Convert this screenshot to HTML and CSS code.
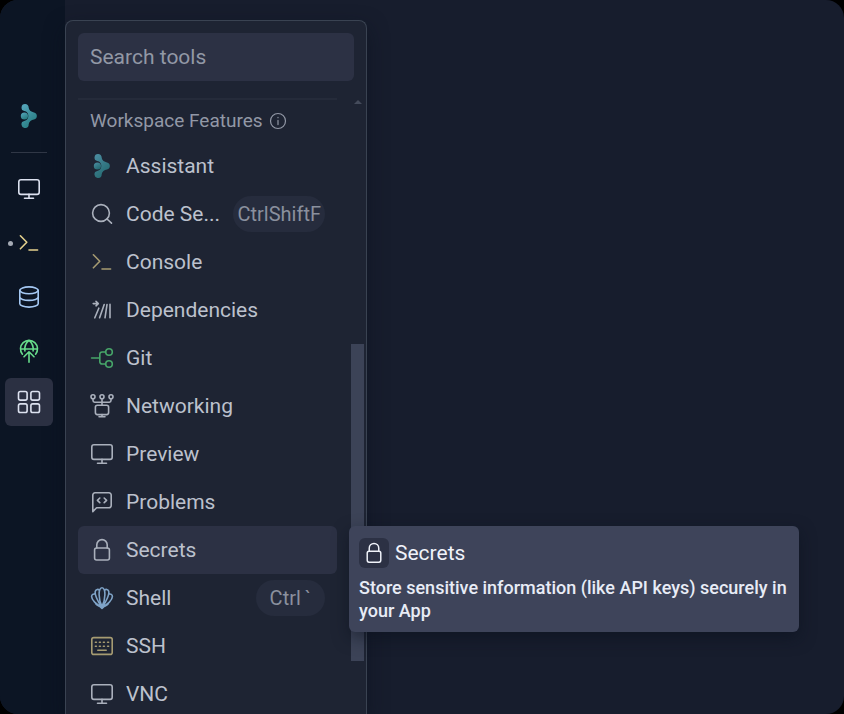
FILE: index.html
```html
<!DOCTYPE html>
<html lang="en">
<head>
<meta charset="utf-8">
<meta name="viewport" content="width=device-width, initial-scale=1">
<title>Workspace tools</title>
<link rel="stylesheet" href="styles.css">
</head>
<body>
<svg class="sprite" aria-hidden="true">
  <defs>
    <linearGradient id="teal" x1="0" y1="0" x2="0.6" y2="1">
      <stop offset="0" stop-color="#59a9c0"/>
      <stop offset="1" stop-color="#267b80"/>
    </linearGradient>
  </defs>
  <symbol id="assistant" viewBox="0 0 24 24">
    <g fill="url(#teal)" stroke="none">
      <path d="M8 0a3.600 3.600 0 0 1 3.700 3.700c.3 2.600 2.600 4.200 5.300 4.700a3.700 3.700 0 0 1 0 7.200c-2.700.5-5 2.100-5.300 4.700A3.600 3.600 0 1 1 7.300 16.900 5 5 0 0 0 7.300 7.100 3.600 3.600 0 0 1 8 0Z"/>
      <circle cx="7.400" cy="12" r="3.600"/>
    </g>
  </symbol>
  <symbol id="monitor" viewBox="0 0 24 24"><rect x="1.8" y="2.800" width="20.4" height="14.600" rx="2.2"/><path d="M12 17.400v3.800M7.5 21.200h9"/></symbol>
  <symbol id="console" viewBox="0 0 24 24"><path d="m3.4 4.8 6.4 6.5-6.4 6.5M12 19h8.6"/></symbol>
  <symbol id="database" viewBox="0 0 24 24"><ellipse cx="12" cy="5.3" rx="9.2" ry="3.4"/><path d="M2.8 5.3v13.4c0 1.9 4.1 3.4 9.2 3.4s9.2-1.5 9.2-3.4V5.3M2.8 12c0 1.9 4.1 3.4 9.2 3.4s9.2-1.5 9.2-3.4"/></symbol>
  <symbol id="deploy" viewBox="0 0 24 24"><path d="M5.400 15.200a8.500 8.500 0 1 1 13.200 0M3.600 10h16.800M7.900 12C7.400 8 8.600 4 12 1.300c3.400 2.700 4.600 6.700 4.100 10.700M12 23.200V13M7 17.800l5-5 5 5"/></symbol>
  <symbol id="grid" viewBox="0 0 24 24"><rect x="1.500" y="1.500" width="8.600" height="8.600" rx="1.8"/><rect x="13.900" y="1.500" width="8.600" height="8.600" rx="1.8"/><rect x="1.500" y="13.900" width="8.600" height="8.600" rx="1.8"/><rect x="13.900" y="13.900" width="8.600" height="8.600" rx="1.8"/></symbol>
  <symbol id="info" viewBox="0 0 24 24"><circle cx="12" cy="12" r="10"/><path d="M12 11.2v5.6M12 7.2v.4"/></symbol>
  <symbol id="search" viewBox="0 0 24 24"><circle cx="11" cy="11" r="8.4"/><path d="m17 17 4.5 4.2"/></symbol>
  <symbol id="dependencies" viewBox="0 0 24 24"><path d="M3.200 5.600h5M6 3.400l2.300 2.200L6 7.800M4.800 19.800l4-9.600M9.600 19.800l4.600-13.200M15 19.800l2-13.200M20 6.400v13.400"/></symbol>
  <symbol id="git" viewBox="0 0 24 24"><path d="M1.6 12h8.2M15.5 6H12a2.2 2.2 0 0 0-2.2 2.2v7.6A2.2 2.2 0 0 0 12 18h3.5"/><circle cx="19" cy="6" r="3.3"/><circle cx="19" cy="18" r="3.3"/></symbol>
  <symbol id="network" viewBox="0 0 24 24"><circle cx="3" cy="2.8" r="2"/><circle cx="12" cy="2.8" r="2"/><circle cx="21" cy="2.8" r="2"/><path d="M3 4.8v1.8a1.6 1.6 0 0 0 1.6 1.6h14.8A1.6 1.6 0 0 0 21 6.600V4.800M12 4.800v6.400M12 20.600v2M9 22.800h6"/><rect x="5.400" y="11.200" width="13.200" height="9.400" rx="2"/></symbol>
  <symbol id="problems" viewBox="0 0 24 24"><path d="M2.800 21.600V5A2.200 2.200 0 0 1 5 2.800h14A2.200 2.200 0 0 1 21.200 5v10.600a2.200 2.200 0 0 1-2.200 2.200H6.600ZM9.800 8l-2.400 2.300 2.400 2.300M14.200 8l2.400 2.300-2.400 2.300"/></symbol>
  <symbol id="lock" viewBox="0 0 24 24"><rect x="4.600" y="10" width="14.800" height="12" rx="2"/><path d="M6.800 10V6.800a5.200 5.200 0 0 1 10.400 0V10"/></symbol>
  <symbol id="shell" viewBox="0 0 24 24"><path d="M12 20.500C8.500 14 7.800 1.800 12 1.800s3.500 12.200 0 18.700M11.500 20.500C7.500 15.500 4.500 8 5.300 5.200 6 3 8.200 3 9.400 4.200M12.500 20.500c4-5 7-12.500 6.200-15.300-.7-2.200-2.900-2.200-4.100-1M11 20.500C6.500 18.500 1.600 14 1.600 10.600c0-2 1.600-3 3.700-2.400M13 20.500c4.500-2 9.400-6.500 9.400-9.900 0-2-1.600-3-3.700-2.400M5.500 17.300c1 1.900 2.500 2.700 5.200 2.700M18.500 17.300c-1 1.900-2.500 2.700-5.200 2.700"/><path fill="currentColor" d="M8.600 19.500h6.800L12 22.400Z"/></symbol>
  <symbol id="keyboard" viewBox="0 0 24 24"><rect x="1.800" y="3.600" width="20.400" height="16.800" rx="2"/><path d="M5.400 8.200h1M9.400 8.200h1M13.400 8.200h1M17.600 8.200h1M5.400 12.200h1M9.400 12.200h1M13.400 12.200h1M17.600 12.200h1M7.800 16.200h8.400"/></symbol>
</svg>

<div class="app">
  <nav class="rail" aria-label="Tools">
    <button class="rail-btn" aria-label="Assistant"><svg class="icon"><use href="#assistant"/></svg></button>
    <hr class="rail-rule">
    <div class="rail-group">
      <button class="rail-btn" aria-label="Preview"><svg class="icon"><use href="#monitor"/></svg></button>
      <button class="rail-btn open yellow" aria-label="Console"><svg class="icon"><use href="#console"/></svg></button>
      <button class="rail-btn blue" aria-label="Database"><svg class="icon"><use href="#database"/></svg></button>
      <button class="rail-btn green" aria-label="Deployments"><svg class="icon"><use href="#deploy"/></svg></button>
    </div>
    <button class="rail-btn active" aria-label="All tools"><svg class="icon"><use href="#grid"/></svg></button>
  </nav>

  <section class="menu" aria-label="All tools">
    <input class="search" type="search" placeholder="Search tools" aria-label="Search tools">
    <div class="menu-body">
      <div class="list">
        <h2 class="heading">Workspace Features <svg class="icon-small"><use href="#info"/></svg></h2>
        <ul class="items">
          <li><button class="item"><svg class="icon dim"><use href="#assistant"/></svg><span class="name">Assistant</span></button></li>
          <li><button class="item"><svg class="icon"><use href="#search"/></svg><span class="name">Code Se...</span><span class="keys wide"><kbd>Ctrl</kbd><kbd>Shift</kbd><kbd>F</kbd></span></button></li>
          <li><button class="item"><svg class="icon yellow"><use href="#console"/></svg><span class="name">Console</span></button></li>
          <li><button class="item"><svg class="icon"><use href="#dependencies"/></svg><span class="name">Dependencies</span></button></li>
          <li><button class="item"><svg class="icon green"><use href="#git"/></svg><span class="name">Git</span></button></li>
          <li><button class="item"><svg class="icon"><use href="#network"/></svg><span class="name">Networking</span></button></li>
          <li><button class="item"><svg class="icon"><use href="#monitor"/></svg><span class="name">Preview</span></button></li>
          <li><button class="item"><svg class="icon"><use href="#problems"/></svg><span class="name">Problems</span></button></li>
          <li class="has-tip">
            <button class="item selected" aria-describedby="secrets-tip"><svg class="icon"><use href="#lock"/></svg><span class="name">Secrets</span></button>
            <div class="tip" role="tooltip" id="secrets-tip">
              <div class="tip-head"><span class="tip-icon"><svg class="icon"><use href="#lock"/></svg></span>Secrets</div>
              <p class="tip-text">Store sensitive information (like API keys) securely in your App</p>
            </div>
          </li>
          <li><button class="item"><svg class="icon blue"><use href="#shell"/></svg><span class="name">Shell</span><span class="keys"><kbd>Ctrl</kbd><kbd>`</kbd></span></button></li>
          <li><button class="item"><svg class="icon yellow"><use href="#keyboard"/></svg><span class="name">SSH</span></button></li>
          <li><button class="item"><svg class="icon"><use href="#monitor"/></svg><span class="name">VNC</span></button></li>
        </ul>
      </div>
      <div class="scrollbar" aria-hidden="true"><span class="arrow"></span><span class="thumb"></span></div>
    </div>
  </section>
</div>
</body>
</html>
```
FILE: styles.css
```css
* { box-sizing: border-box; }

body {
  margin: 0;
  background: #000;
  color: #bcc1cd;
  font: 21px/28px Roboto, "Liberation Sans", sans-serif;
}

button, input, kbd { font: inherit; color: inherit; }
button { border: 0; background: none; padding: 0; cursor: pointer; }

.sprite { position: absolute; width: 0; height: 0; }

.icon, .icon-small {
  flex: none;
  width: 24px;
  height: 24px;
  fill: none;
  stroke: currentColor;
  stroke-width: 1.6;
  stroke-linecap: round;
  stroke-linejoin: round;
}
.icon-small { width: 18px; height: 18px; }

.app {
  display: flex;
  height: 100vh;
  overflow: hidden;
  border-radius: 18px;
  background: #171d2d;
}

/* Left rail */
.rail {
  flex: none;
  width: 65px;
  padding: 92px 12px 0 5px;
  background: #0c1524;
  color: #dce1ef;
}
.rail-group { display: grid; gap: 6px; margin-bottom: 3px; }
.rail-btn {
  position: relative;
  display: grid;
  place-items: center;
  width: 48px;
  height: 48px;
  border-radius: 6px;
}
.rail-rule { width: 36px; height: 1px; margin: 12px 6px; border: 0; background: #303746; }
.rail .active { background: #2b3042; }
.rail .yellow { color: #e5d18d; }
.rail .blue { color: #a5c8f3; }
.rail .green { color: #67dc8b; }
.open::before {
  content: "";
  position: absolute;
  left: 3px;
  width: 5px;
  height: 5px;
  border-radius: 50%;
  background: #a5aab4;
}

/* Tool menu */
.menu {
  flex: none;
  width: 302px;
  margin-top: 20px;
  padding: 12px 12px 0;
  border: 1px solid #3a4352;
  border-bottom: 0;
  border-radius: 8px 8px 0 0;
  background: #1e2433;
  box-shadow: 0 8px 20px #0a0f1b80;
}
.search {
  display: block;
  width: 100%;
  height: 48px;
  padding: 0 12px;
  border: 0;
  border-radius: 6px;
  background: #2c3144;
  appearance: none;
}
.search::placeholder { color: #9298a6; opacity: 1; }

.menu-body {
  display: grid;
  grid-template-columns: minmax(0, 1fr) 13px;
  gap: 14px;
  margin: 17px -10px 0 0;
}
.heading {
  display: flex;
  align-items: center;
  gap: 6px;
  height: 44px;
  margin: 0;
  padding: 0 12px;
  border-top: 2px solid #252b3a;
  color: #9298a6;
  font-size: 19px;
  font-weight: 400;
}
.items { margin: 0; padding: 0; list-style: none; }
.item {
  display: flex;
  align-items: center;
  gap: 12px;
  width: 100%;
  height: 48px;
  padding: 0 12px;
  border-radius: 6px;
  text-align: left;
}
.selected { background: #2c3144; }
.item .icon { color: #aab0bc; }
.item .yellow { color: #a69b72; }
.item .green { color: #47a569; }
.item .blue { color: #7fa3c7; }
.item .dim { opacity: 0.8; }
.name {
  flex: 1;
  min-width: 0;
  overflow: hidden;
  text-overflow: ellipsis;
  white-space: nowrap;
}
.keys {
  display: flex;
  flex: none;
  justify-content: center;
  gap: 4px;
  height: 36px;
  padding: 0 14px;
  border-radius: 18px;
  background: #262c3d;
  color: #8a909e;
  font-size: 20px;
  line-height: 36px;
}
.wide { gap: 0; padding: 0 4px; }

.scrollbar { display: flex; flex-direction: column; align-items: center; }
.arrow {
  margin-top: 2px;
  border: 4px solid transparent;
  border-top: 0;
  border-bottom-color: #444b5b;
}
.thumb { width: 13px; height: 317px; margin-top: 240px; background: #3c4357; }

/* Tooltip */
.has-tip { position: relative; }
.tip {
  position: absolute;
  z-index: 1;
  top: 0;
  left: calc(100% + 12px);
  width: 450px;
  padding: 12px 10px 10px;
  border-radius: 6px;
  background: #3e445a;
  box-shadow: 0 6px 16px #0a0f1b80;
  color: #f0f3fa;
}
.tip-head { display: flex; align-items: center; gap: 6px; height: 30px; }
.tip-icon {
  display: grid;
  place-items: center;
  width: 30px;
  height: 30px;
  border-radius: 6px;
  background: #2c3144;
}
.tip-icon .icon { width: 22px; height: 22px; }
.tip-text { margin: 8px 0 0; color: #e8ecf6; font-size: 18px; line-height: 23px; font-weight: 500; }
```
